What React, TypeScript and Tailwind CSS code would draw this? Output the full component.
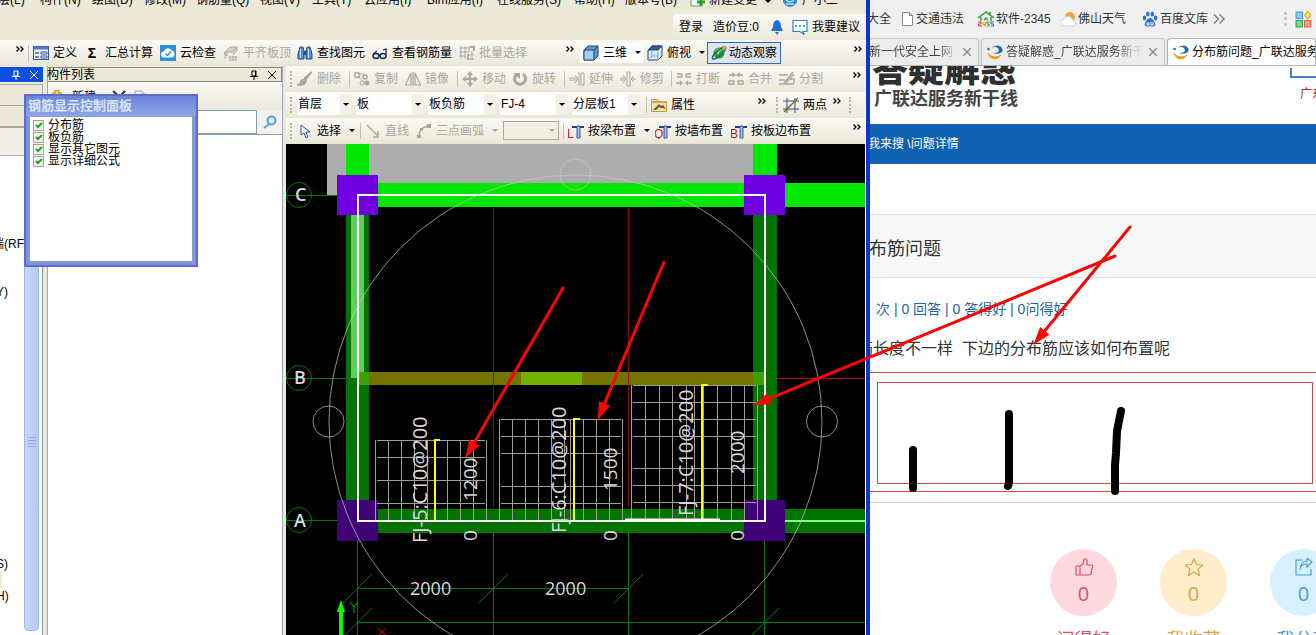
import { ReactNode } from "react";
import clsx from "clsx";

const BAR = "flex h-[26px] items-center border-b border-[#e6e3d3] bg-linear-to-b from-[#fbfaf6] to-[#ebe8da]";

const menus = [
  { label: "层(L)", width: "w-[42px]" },
  { label: "构件(N)", width: "w-[52px]" },
  { label: "绘图(D)", width: "w-[52px]" },
  { label: "修改(M)", width: "w-[52px]" },
  { label: "钢筋量(Q)", width: "w-[64px]" },
  { label: "视图(V)", width: "w-[52px]" },
  { label: "工具(T)", width: "w-[52px]" },
  { label: "云应用(I)", width: "w-[63px]" },
  { label: "Bim应用(I)", width: "w-[70px]" },
  { label: "在线服务(S)", width: "w-[77px]" },
  { label: "帮助(H)", width: "w-[51px]" },
  { label: "版本号(B)", width: "w-[64px]" },
];

const treeRows: Record<number, string> = { 5: "端(RF", 8: "Y)", 25: "S)", 27: "H)" };

const layers = ["分布筋", "板负筋", "显示其它图元", "显示详细公式"];

const G = "#aaa899";

const icons: Record<string, ReactNode> = {
  form: (
    <>
      <rect x="0.5" y="1.5" width="15" height="13" fill="#e4ecfa" stroke="#35599c" />
      <path d="M1 3h14" stroke="#4c7bd0" strokeWidth="3" />
      <path d="M2 8h4M2 12h4" stroke="#222" />
      <path d="M8 7h6v2H8zM8 11h6v2H8z" fill="#fff" stroke="#35599c" />
    </>
  ),
  cloud: (
    <>
      <rect width="16" height="16" fill="#2a93d8" />
      <path d="M4 12.500a3 3 0 0 1 0-6 4 4 0 0 1 7.500-1 3.600 3.600 0 0 1 .5 7z" fill="#fff" />
      <path d="M5.500 8.500l2 2 3.500-4" fill="none" stroke="#2a93d8" strokeWidth="1.500" />
    </>
  ),
  align: (
    <path d="M1 8l6-6h7l-5 5H4v4l-3-3zM2 14V9M5 12h9M6 15h8M7 12v3M10 11v4M13 11v4M9 7l5-5v3l-4 5" fill="#d4d1c5" stroke={G} />
  ),
  binoculars: (
    <>
      <path d="M3 2h3l1 4v8H1V9zM10 2h3l2 7v5H9V6z" fill="#5a8ed6" stroke="#234a8c" />
      <path d="M6.500 6h3v4h-3z" fill="#234a8c" />
      <path d="M3.500 4v9M11.500 4v9" stroke="#c7defa" />
    </>
  ),
  glasses: (
    <>
      <ellipse cx="4" cy="11" rx="3" ry="2.500" fill="#cfe0f4" stroke="#22304c" strokeWidth="1.500" />
      <ellipse cx="11" cy="11" rx="3" ry="2.500" fill="#cfe0f4" stroke="#22304c" strokeWidth="1.500" />
      <path d="M7 10h1M1 9l4-3M14 10V4l-3 1" fill="none" stroke="#22304c" strokeWidth="1.300" />
    </>
  ),
  batch: (
    <>
      <path d="M0 3h10M0 7h10M0 11h7M2 1v13M6 1v13M10 1v6M8 10h7M8 14h7M13 6v9" fill="none" stroke={G} />
      <path d="M11 2h4v4M9 9v6" fill="none" stroke={G} strokeWidth="2" />
    </>
  ),
  cube: (
    <>
      <path d="M1 5l4-4h10v10l-4 4H1z" fill="#5d93cf" stroke="#24466f" />
      <path d="M1 5h10v10H1z" fill="#a8cdf0" stroke="#24466f" />
      <path d="M11 5l4-4" stroke="#24466f" />
    </>
  ),
  cubeTop: (
    <>
      <path d="M1 5l4-4h10v10l-4 4H1z" fill="#dcebf8" stroke="#24466f" />
      <path d="M1 5l4-4h10l-4 4z" fill="#2f6396" stroke="#24466f" />
      <path d="M11 5v10M5 5v6h6M5 11l-4 4" fill="none" stroke="#7ea6cc" />
    </>
  ),
  orbit: (
    <>
      <circle cx="8" cy="8" r="5.500" fill="#2aa04a" />
      <path d="M4 6q3-4 7-1-3 1-3 4-3 0-4-3z" fill="#8be07f" />
      <ellipse cx="8" cy="8" rx="8.500" ry="2.500" transform="rotate(-42 8 8)" fill="none" stroke="#21704a" strokeWidth="1.500" />
      <circle cx="13" cy="3" r="2" fill="#dca23c" />
    </>
  ),
  brush: <path d="M14 1L7 7l2 2 6-8zM7 8q-4 0-4 4l-3 2q6 1 8-1 2-2 1-4z" fill={G} stroke={G} />,
  copy: (
    <>
      <circle cx="3" cy="4" r="2.500" fill="none" stroke={G} strokeWidth="1.500" />
      <circle cx="11" cy="6" r="2" fill="none" stroke={G} strokeWidth="1.500" />
      <path d="M6 3h4M5 6l5 6" stroke={G} strokeDasharray="2 1" />
      <circle cx="13" cy="12" r="2.500" fill={G} />
      <circle cx="8" cy="12" r="2" fill="none" stroke={G} />
    </>
  ),
  mirror: <path d="M6 2v12H0.500zM10 2v12h5.500zM8 1v14" fill="none" stroke={G} strokeWidth="1.200" />,
  move: (
    <>
      <path d="M8 3v10M3 8h10" stroke={G} strokeWidth="2" />
      <path d="M8 0l3 4H5zM8 16l3-4H5zM0 8l4-3v6zM16 8l-4-3v6z" fill={G} />
    </>
  ),
  rotate: (
    <>
      <path d="M4 4a5.500 5.500 0 1 0 7-1" fill="none" stroke={G} strokeWidth="3" />
      <path d="M1 2h7v6z" fill={G} />
    </>
  ),
  extend: <path d="M0 7h8M0 9h8M10 1v14M12 2h3v12h-3zM6 4l3 4-3 4" fill="none" stroke={G} />,
  trim: <path d="M0 7h5M0 9h5M11 8h5M7 1h3v14H7zM3 4l3 4-3 4M14 5l-3 3 3 3" fill="none" stroke={G} />,
  split2: <path d="M1 3h5v3H1M15 3h-5v3h5M0 12h6M10 12h6M4 10l2 2-2 2M12 10l-2 2 2 2" fill="none" stroke={G} strokeWidth="1.300" />,
  merge: <path d="M1 4h5M10 4h5M4 2l3 2-3 2M12 2L9 4l3 2M1 10h5v3H1zM10 10h5v3h-5z" fill="none" stroke={G} strokeWidth="1.300" />,
  cut: <path d="M0 4h9M0 9h6M0 13h15M14 1L5 12M15 3L7 12M10 8h5v5" fill="none" stroke={G} strokeWidth="1.300" />,
  props: (
    <>
      <path d="M0.500 2.500h6l1 2h8v10h-15z" fill="#f8dfae" stroke="#d09a4c" />
      <path d="M1 5h14" stroke="#e0a058" strokeWidth="2" />
      <path d="M2 13l6-6 2 2 2-1 3 4-3-1-2 0-2-1-3 3z" fill="#6b5c2c" />
    </>
  ),
  twoPoint: (
    <>
      <path d="M4 1v15M12 1v15M0 4h16M0 12h16" stroke="#3b4a78" />
      <path d="M1 15L15 1" stroke="#b0402c" strokeWidth="1.300" />
      <circle cx="4" cy="12" r="1.500" fill="#3b9a38" />
      <circle cx="12" cy="4" r="1.500" fill="#3b9a38" />
    </>
  ),
  cursor: <path d="M4 2v10l3-2 2 5 2-1-2-5h4z" fill="#e8f0fb" stroke="#3a5a9a" />,
  line: <path d="M2 2l11 11M13 8v6H8" fill="none" stroke={G} strokeWidth="1.500" />,
  arc: (
    <>
      <path d="M3 13Q3 4 13 3" fill="none" stroke={G} strokeWidth="1.500" />
      <path d="M1 12h4v3H1zM11 1h4v4h-4zM4 5h3v3H4z" fill={G} />
    </>
  ),
  chat: (
    <>
      <path d="M1 1.500h14v11h-4l1 3-4-3H1z" fill="#fff" stroke="#2e7fd0" strokeWidth="1.200" />
      <path d="M3 7h2M7 7h2M11 7h2" stroke="#2e7fd0" strokeWidth="1.500" />
    </>
  ),
  bell: <path d="M8 1q4 1 4 7l2 4H2l2-4q0-6 4-7zM6 13h4l-2 3z" fill="#1f6fd6" />,
  newDoc: (
    <>
      <path d="M2 0h10v14H2z" fill="#eef8ea" stroke="#6a9a60" />
      <path d="M8 10h8M12 6v8" stroke="#2ba32b" strokeWidth="3" />
    </>
  ),
  glodon: (
    <>
      <path d="M3 5Q8 0 13 2q4 3 2 6-4 3-9 1 6 0 6-3-1-3-4-3-3 0-5 2z" fill="#1c70b8" />
      <path d="M1 9q2 4 7 4 4 0 6-2-2 4-7 4-5-1-6-6z" fill="#f39a1e" stroke="#f39a1e" />
      <circle cx="1.500" cy="5" r="1.300" fill="#1c70b8" />
    </>
  ),
  file: <path d="M2.500 1.500h7l3 3v10h-10zM9.500 1.500v3h3" fill="#fff" stroke="#8a8a8a" />,
  house: (
    <>
      <path d="M0 7l8-6 8 6M3 6v4M13 6v4M12 1v3M6 9l2-2 2 2" fill="none" stroke="#2f9e3f" strokeWidth="1.500" />
      <path d="M0 11h3v2H0.500v2H4" fill="none" stroke="#d8372a" />
      <path d="M5 11v2.500h3M7 11v5" fill="none" stroke="#e88b1c" />
      <path d="M12 11H9v2h2v2H9" fill="none" stroke="#2f9e3f" />
      <path d="M16 11h-3v2h2.500v2H13" fill="none" stroke="#2c6fc4" />
    </>
  ),
  weather: (
    <>
      <circle cx="10" cy="6" r="5" fill="#f7a530" />
      <path d="M4 15a3.500 3.500 0 0 1 0-7 4.500 4.500 0 0 1 8.500 1 3 3 0 0 1 .5 6z" fill="#fff" stroke="#cfd4da" />
    </>
  ),
  paw: (
    <g fill="#2f6fe0">
      <ellipse cx="2.500" cy="7" rx="1.800" ry="2.400" />
      <ellipse cx="5.800" cy="3" rx="1.800" ry="2.500" />
      <ellipse cx="10.300" cy="3" rx="1.800" ry="2.500" />
      <ellipse cx="13.600" cy="7" rx="1.800" ry="2.400" />
      <path d="M8 7q2 0 4 3t1 5q-2 1-5 0-3 1-5 0-1-2 1-5t4-3z" />
      <path d="M5 12h2v2H5zM9 11v3h2v-3" fill="none" stroke="#fff" />
    </g>
  ),
  apps: (
    <>
      <rect x="1" y="1" width="6" height="6" fill="#8fd0f5" stroke="#3b9bdc" />
      <rect x="1" y="9" width="6" height="6" fill="#7fd79a" stroke="#27a350" />
      <rect x="9" y="9" width="6" height="6" fill="#f8a08c" stroke="#e0604a" />
      <path d="M12 0.500l3 3.500-3 3.500L9 4z" fill="#fde36a" stroke="#e3a91a" />
    </>
  ),
};

function Icon({ name, className = "size-4" }: { name: string; className?: string }) {
  return (
    <svg viewBox="0 0 16 16" className={clsx("shrink-0", className)} aria-hidden="true">
      {icons[name]}
    </svg>
  );
}

// Placement icons: a letter in front of a beam section
function BeamIcon({ letter }: { letter: string }) {
  return (
    <svg viewBox="0 0 16 16" className="size-4 shrink-0" aria-hidden="true">
      <path d="M4 4h12" stroke="#1f3f7a" strokeWidth="2" />
      <path d="M9 3h3v12H9z" fill="#9dbbe6" stroke="#3a5a9a" />
      <text x="-1" y="15" fontSize="12" fill="#b01818">
        {letter}
      </text>
    </svg>
  );
}

function Caret({ disabled = false }: { disabled?: boolean }) {
  return (
    <svg viewBox="0 0 6 3" className={clsx("h-[3px] w-1.5 shrink-0", disabled ? "fill-[#aaa899]" : "fill-black")} aria-hidden="true">
      <path d="M0 0h6L3 3z" />
    </svg>
  );
}

function Tool({ icon, letter, label, width, disabled = false, caret = false }: {
  icon?: string;
  letter?: string;
  label: string;
  width: string;
  disabled?: boolean;
  caret?: boolean;
}) {
  return (
    <button disabled={disabled} className={clsx("flex shrink-0 items-center gap-1 whitespace-nowrap", width, disabled && "text-[#aaa899]")}>
      {icon && <Icon name={icon} />}
      {letter && <BeamIcon letter={letter} />}
      {label}
      {caret && <span className="pl-1"><Caret disabled={disabled} /></span>}
    </button>
  );
}

function Grip() {
  return <span className="mr-[5px] ml-1 h-4 w-0.5 shrink-0 border-l-2 border-dotted border-[#b9b6a6]" />;
}

function Sep() {
  return <span className="mr-1 h-4 w-px shrink-0 bg-[#c5c2b2]" />;
}

function More({ className }: { className?: string }) {
  return (
    <button aria-label="更多" className={clsx("shrink-0 pb-2", className)}>
      <svg viewBox="0 0 8 6" className="h-1.5 w-2" aria-hidden="true">
        <path d="M0.500 0.500L3 3 0.500 5.500M4.500 0.500L7 3 4.500 5.500" fill="none" stroke="#000" strokeWidth="1.300" />
      </svg>
    </button>
  );
}

function Combo({ value, label, width }: { value: string; label: string; width: string }) {
  return (
    <div className={clsx("relative mr-1 shrink-0 bg-white", width)}>
      <select aria-label={label} className="block h-5 w-full appearance-none pb-0.5 pl-px outline-none">
        <option>{value}</option>
      </select>
      <span className="pointer-events-none absolute inset-y-0 right-0 flex w-3 items-center justify-center bg-[#f3f1e7]">
        <Caret />
      </span>
    </div>
  );
}

function PanelButtons() {
  return (
    <span className="ml-auto flex gap-2 pr-1">
      <button aria-label="固定">
        <svg viewBox="0 0 10 10" className="size-2.5" fill="none" stroke="currentColor" aria-hidden="true">
          <path d="M3 1h4v5H3zM6.500 1v5M1 6.500h8M5 6.500V10" />
        </svg>
      </button>
      <button aria-label="关闭">
        <svg viewBox="0 0 10 10" className="size-2.5" fill="none" stroke="currentColor" aria-hidden="true">
          <path d="M1 1l8 8M9 1L1 9" />
        </svg>
      </button>
    </span>
  );
}

function TopBars() {
  return (
    <>
      <div className="flex h-3.5 items-end overflow-hidden whitespace-nowrap">
        <nav className="-ml-0.5 flex h-3.5 shrink-0">
          {menus.map((m) => (
            <button key={m.label} className={clsx("-mt-2 h-4 shrink-0 text-left leading-4", m.width)}>
              {m.label}
            </button>
          ))}
        </nav>
        <button className="-mt-2 flex h-[22px] w-[93px] shrink-0 gap-1 leading-4">
          <Icon name="newDoc" />
          新建变更
          <span className="pt-2 pl-1"><Caret /></span>
        </button>
        <button className="-mt-2 flex h-[22px] shrink-0 gap-1 leading-4">
          <svg viewBox="0 0 16 16" className="size-4" aria-hidden="true">
            <path d="M1 0h14v10q-3 5-7 5t-7-5z" fill="#2a8fe0" />
            <path d="M4 8q4 4 8 0M4 12h8" fill="none" stroke="#fff" />
          </svg>
          广小二
        </button>
      </div>
      <div className="flex h-[26px] justify-end">
        <div className="flex w-[193px] items-center rounded-l bg-linear-to-b from-[#fbfaf6] to-[#ebe8da] pl-1.5 whitespace-nowrap">
          <button className="w-[34px] shrink-0 text-left">登录</button>
          <span className="w-14 shrink-0">造价豆:0</span>
          <button aria-label="通知" className="w-[23px] shrink-0"><Icon name="bell" /></button>
          <button className="flex shrink-0 items-center gap-1"><Icon name="chat" />我要建议</button>
        </div>
      </div>
      <div className={BAR}>
        <More className="mr-1 ml-4" />
        <Sep />
        <Tool icon="form" label="定义" width="w-[54px]" />
        <button className="flex w-[73px] shrink-0 items-center gap-2 whitespace-nowrap">
          <b className="w-2.5 text-sm">Σ</b>汇总计算
        </button>
        <Tool icon="cloud" label="云检查" width="w-[63px]" />
        <Tool icon="align" label="平齐板顶" width="w-[74px]" disabled />
        <Tool icon="binoculars" label="查找图元" width="w-[75px]" />
        <Tool icon="glasses" label="查看钢筋量" width="w-[87px]" />
        <Tool icon="batch" label="批量选择" width="w-[107px]" disabled />
        <More className="mr-1.5" />
        <div className="mr-1 flex h-5 items-center bg-white pl-[3px]">
          <Tool icon="cube" label="三维" width="w-[60px]" caret />
        </div>
        <Tool icon="cubeTop" label="俯视" width="w-[60px]" caret />
        <button className="flex h-[22px] shrink-0 items-center gap-0.5 border border-[#316ac5] bg-[#dfe5ee] px-[3px] whitespace-nowrap">
          <Icon name="orbit" />动态观察
        </button>
        <More className="mr-1 ml-auto" />
      </div>
    </>
  );
}

function EditBars() {
  return (
    <>
      <div className={BAR}>
        <Grip />
        <Tool icon="brush" label="删除" width="w-[52px]" disabled />
        <Sep />
        <Tool icon="copy" label="复制" width="w-[51px]" disabled />
        <Tool icon="mirror" label="镜像" width="w-[52px]" disabled />
        <Sep />
        <Tool icon="move" label="移动" width="w-[50px]" disabled />
        <Tool icon="rotate" label="旋转" width="w-[52px]" disabled />
        <Sep />
        <Tool icon="extend" label="延伸" width="w-[51px]" disabled />
        <Tool icon="trim" label="修剪" width="w-[51px]" disabled />
        <Sep />
        <Tool icon="split2" label="打断" width="w-[52px]" disabled />
        <Tool icon="merge" label="合并" width="w-[51px]" disabled />
        <Tool icon="cut" label="分割" width="w-[51px]" disabled />
        <More className="mr-1 ml-auto" />
      </div>
      <div className={BAR}>
        <Grip />
        <Combo value="首层" label="楼层" width="w-[55px]" />
        <Combo value="板" label="构件类型" width="w-[68px]" />
        <Combo value="板负筋" label="构件种类" width="w-[68px]" />
        <Combo value="FJ-4" label="构件名称" width="w-[68px]" />
        <Combo value="分层板1" label="分层" width="w-[68px]" />
        <span className="w-0.5 shrink-0" />
        <Sep />
        <Tool icon="props" label="属性" width="w-[107px]" />
        <More className="mr-1.5" />
        <Grip />
        <Tool icon="twoPoint" label="两点" width="w-[50px]" />
        <More className="mr-1" />
        <Grip />
      </div>
      <div className={BAR}>
        <Grip />
        <Tool icon="cursor" label="选择" width="w-[63px]" caret />
        <Sep />
        <Tool icon="line" label="直线" width="w-[51px]" disabled />
        <Tool icon="arc" label="三点画弧" width="w-[85px]" disabled caret />
        <div className="relative mr-1 ml-0.5 w-14 shrink-0">
          <select aria-label="画弧方式" disabled className="block h-[19px] w-full appearance-none border border-[#aca899] bg-[#f1efe4]">
            <option></option>
          </select>
          <span className="pointer-events-none absolute inset-y-0 right-1 flex items-center"><Caret disabled /></span>
        </div>
        <Sep />
        <Tool letter="L" label="按梁布置" width="w-[87px]" caret />
        <Tool letter="Q" label="按墙布置" width="w-[76px]" />
        <Tool letter="B" label="按板边布置" width="w-[85px]" />
        <More className="mr-1 ml-auto" />
      </div>
    </>
  );
}

function ModuleTree() {
  return (
    <div className="flex w-[43px] shrink-0 flex-col bg-[#ece9d8]">
      <div className="mt-px flex h-[15px] items-center bg-[#0a50e0] text-white">
        <PanelButtons />
      </div>
      <div className="mt-0.5 h-[22px] border border-l-0 border-[#aca899]" />
      <div className="h-[22px] border-b-2 border-[#aca899]" />
      <div className="h-7 border-b border-[#aca899] bg-[#f1efe6]" />
      <div className="flex min-h-0 flex-1 border-r border-[#7f9db9] bg-white">
        <ul className="w-6 shrink-0 overflow-hidden">
          {Array.from({ length: 30 }, (_, i) => (
            <li key={i} className="flex h-4 items-center">
              {i === 26 && <span className="h-4 w-0.5 bg-[#ece9d8]" />}
              <span className={i === 5 ? "-ml-2 whitespace-nowrap" : "-ml-1"}>{treeRows[i]}</span>
            </li>
          ))}
        </ul>
        <div className="mb-1 flex w-[15px] flex-col items-center justify-center gap-0.5 rounded-b-sm border border-[#9db8f0] bg-linear-to-r from-[#c9d8fd] to-[#b5c8fa] pt-24">
          {[0, 1, 2, 3].map((i) => (
            <span key={i} className="h-px w-2 bg-[#8fa8e4]" />
          ))}
        </div>
      </div>
    </div>
  );
}

function ComponentList() {
  return (
    <div className="ml-1 flex min-w-0 flex-1 flex-col border-x border-[#9aa7b8]">
      <div className="mt-px flex h-[15px] items-center border border-l-0 border-[#8a887a] bg-[#ece9d8] text-black">
        <h2 className="-ml-px leading-3">构件列表</h2>
        <PanelButtons />
      </div>
      <div className="flex h-7 items-center bg-linear-to-b from-[#fbfaf6] to-[#ebe8da] pb-0.5 pl-1">
        <svg viewBox="0 0 10 10" className="size-2.5" aria-hidden="true">
          <path d="M3 0h4v3h3v4H7v3H3V7H0V3h3z" fill="#ffd83c" stroke="#a58a10" />
        </svg>
        <button className="ml-2.5 w-10 shrink-0 pt-1 text-left leading-4">新建</button>
        <svg viewBox="0 0 14 14" className="mt-1 size-3.5" aria-hidden="true">
          <path d="M1 1l12 11M13 1L2 13" stroke="#333" strokeWidth="2" />
        </svg>
        <svg viewBox="0 0 16 14" className="mt-1 ml-2 h-3.5 w-4" fill="#eef3fa" stroke="#8fa6c4" aria-hidden="true">
          <path d="M1 1h7l2 3v8H1zM6 4h6l3 3v6H6z" />
        </svg>
      </div>
      <div className="flex h-6 shrink-0 items-stretch bg-[#ece9d8]">
        <input aria-label="搜索构件" className="min-w-0 flex-1 border border-[#7f9db9] bg-white px-1" />
        <button aria-label="搜索" className="flex w-[25px] items-center justify-center bg-[#f4f2ea]">
          <svg viewBox="0 0 14 14" className="size-3.5" fill="#d9efff" stroke="#5aa0dc" strokeWidth="2" aria-hidden="true">
            <path d="M6 9l-5 4" />
            <circle cx="8.500" cy="5.500" r="4" />
          </svg>
        </button>
      </div>
      <div className="flex-1 border-t border-[#7f9db9] bg-white" />
    </div>
  );
}

function DisplayPanel() {
  return (
    <section className="absolute top-[94px] left-6 w-[174px] border-2 border-[#5f68cf] bg-[#7a93df]">
      <h2 className="bg-linear-to-b from-[#6d83dc] to-[#8ca4ea] pl-0.5 text-[13px] leading-5 font-bold text-[#dbe5fb]">钢筋显示控制面板</h2>
      <div className="mx-[3px] mb-[3px] h-[146px] border border-[#8ba3c0] bg-white px-[3px] pt-0.5">
        {layers.map((name) => (
          <label key={name} className="flex h-3 items-center gap-1 leading-3">
            <span className="relative flex size-[11px]">
              <input type="checkbox" defaultChecked className="size-[11px] appearance-none border border-[#a5a092] bg-[#f0f5ec]" />
              <svg viewBox="0 0 11 11" className="pointer-events-none absolute inset-0" fill="none" stroke="#21a121" strokeWidth="2" aria-hidden="true">
                <path d="M3 5l2 2 4-4" />
              </svg>
            </span>
            {name}
          </label>
        ))}
      </div>
    </section>
  );
}

type MeshProps = { xs: number[]; ys: number[]; bottom: number; bar: number; tick: number };

const meshes: MeshProps[] = [
  { xs: [375, 388, 401, 414, 427, 447, 460, 473, 486], ys: [440, 457, 480, 503], bottom: 520, bar: 435, tick: 440 },
  { xs: [499, 512, 525, 538, 551, 564, 570, 583, 596, 609, 622], ys: [419, 436, 453, 486, 503], bottom: 520, bar: 574, tick: 580 },
  { xs: [631, 645, 659, 672, 686, 694, 703, 717, 731, 744, 757], ys: [385, 402, 419, 436, 468, 485, 502], bottom: 520, bar: 702, tick: 708 },
];

function Mesh({ xs, ys, bottom, bar, tick }: MeshProps) {
  const left = xs[0] + 2;
  const right = xs[xs.length - 1] - 1;
  return (
    <g fill="none" stroke="#a39c94" shapeRendering="crispEdges">
      {xs.map((x) => <path key={x} d={`M${x + 0.5} ${ys[0]}V${bottom}`} />)}
      {ys.map((y) => <path key={y} d={`M${left} ${y + 0.5}H${right}`} />)}
      <path d={`M${tick} ${ys[0]}H${bar}V${bottom}`} stroke="#ffff00" strokeWidth="2" />
    </g>
  );
}

const rebarLabels = [
  { x: 427, y: 543, text: "FJ-5:C10@200", size: 20 },
  { x: 566, y: 533, text: "FJ-6:C10@200", size: 20 },
  { x: 693, y: 516, text: "FJ-7:C10@200", size: 20 },
  { x: 477, y: 501, text: "1200", size: 19 },
  { x: 617, y: 491, text: "1500", size: 19 },
  { x: 744, y: 474, text: "2000", size: 19 },
  { x: 477, y: 541, text: "0", size: 19 },
  { x: 617, y: 541, text: "0", size: 19 },
  { x: 744, y: 541, text: "0", size: 19 },
];

function Drawing() {
  return (
    <svg className="min-h-0 w-full flex-1 bg-black" role="img" aria-label="板负筋平面图">
      <g transform="translate(-286 -144)" fontFamily="'Open Sans', sans-serif">
        <g shapeRendering="crispEdges">
          <path d="M327 144h426v51H327z" fill="#adadad" />
          <path d="M346 144h23v31h-23zM753 144h24v31h-24zM369 183h1600v24H369z" fill="#00e600" />
          <path d="M346 215h23v285h-23zM753 207h24v293h-24zM369 509h1600v24H369z" fill="#007300" />
          <path d="M351 215h13v163h-13z" fill="#5bd05b" />
          <path d="M359 372h406v13H359z" fill="#737300" />
          <path d="M359 372h10v13h-10zM753 372h12v13h-12z" fill="#3fa000" />
          <path d="M521 372h61v13h-61z" fill="#73b000" />
          <path d="M337 175h41v40h-41zM744 175h41v40h-41z" fill="#7000e0" />
          <path d="M337 500h41v41h-41zM744 500h41v41h-41z" fill="#3f0078" />
          <path d="M493.500 208V507M628.500 208V507" stroke="#8c0c0c" />
          <path d="M777 378.500H2000" stroke="#c80000" />
          <path
            d="M357.500 541V635M493.500 533V635M628.500 533V635M764.500 541V635M357 588.500H629M357 622.500H2000M286 195.500H337M286 378.500H346M286 520.500H337"
            stroke="#007a10"
          />
        </g>
        <g stroke="#007a10" fill="none">
          <path d="M343 603l29-29M479 603l29-29M614 603l29-29M343 637l29-29M750 637l29-29" />
          <circle cx="299" cy="195" r="12.500" />
          <circle cx="299" cy="378" r="12.500" />
          <circle cx="299" cy="520" r="12.500" />
        </g>
        {meshes.map((m) => <Mesh key={m.bar} {...m} />)}
        <path d="M785 521H2000" stroke="#80ff80" strokeWidth="2" />
        <path d="M358 195H765V521H358zM625 519.500h95" fill="none" stroke="#fff" strokeWidth="2" />
        <g fill="none" stroke="#c8c8c8" strokeOpacity="0.700">
          <circle cx="575.500" cy="421.500" r="246.500" />
          <circle cx="575.500" cy="174.500" r="15.500" />
          <circle cx="328.500" cy="421.500" r="15.500" />
          <circle cx="822" cy="421.500" r="15.500" />
        </g>
        <g fill="#dcd8dc">
          <g fontSize="18" fontWeight="600">
            <text x="295" y="201">C</text>
            <text x="294" y="384">B</text>
            <text x="294" y="527">A</text>
          </g>
          <text x="410" y="595" fontSize="18">2000</text>
          <text x="545" y="595" fontSize="18">2000</text>
          {rebarLabels.map((l) => (
            <text key={`${l.text}-${l.x}`} transform={`translate(${l.x} ${l.y}) rotate(-90)`} fontSize={l.size}>
              {l.text}
            </text>
          ))}
        </g>
        <path d="M341 600l4 12h-2v23h-4v-23h-2z" fill="#00ff00" />
        <path d="M350 602l4 5 4-5M354 607v6" fill="none" stroke="#00c000" />
        <path d="M378 628l8 8M386 628l-8 8" stroke="#e00000" />
      </g>
    </svg>
  );
}

function Tab({ title, width, icon = true, active = false }: { title: string; width: string; icon?: boolean; active?: boolean }) {
  return (
    <div
      className={clsx(
        "flex h-full items-center rounded-t-sm border border-b-0",
        width,
        active ? "border-[#b5b5b5] bg-white text-black" : "border-[#c4c4c4] bg-[#ececec] text-[#444]"
      )}
    >
      {icon && <span className="pr-[3px] pl-[5px]"><Icon name="glodon" /></span>}
      <span className={clsx("flex-1 overflow-hidden whitespace-nowrap", !active && "mask-r-from-80%")}>{title}</span>
      {!active && (
        <button aria-label="关闭标签页" className="px-[7px]">
          <svg viewBox="0 0 8 8" className="size-2" stroke="#8c8c8c" strokeWidth="1.500" aria-hidden="true">
            <path d="M0 0l8 8M8 0L0 8" />
          </svg>
        </button>
      )}
    </div>
  );
}

const votes = [
  {
    label: "问得好",
    color: "text-[#d9506a]",
    bg: "bg-[#ffd9df]",
    path: "M1 8h4v9H1zM5 8l3-2 1-5q3-1 3 2v4h5q1 1 0 3l-1 6-2 1H5",
  },
  {
    label: "我收藏",
    color: "text-[#d9a441]",
    bg: "bg-[#ffedcc]",
    path: "M9 0.500l2.500 6 6.500.5-5 4 1.500 6.500L9 14l-5.500 3.500L5 11 0 7l6.500-.5z",
  },
  {
    label: "我分享",
    color: "text-[#4a9bd9]",
    bg: "bg-[#d6f0ff]",
    path: "M8 2H1v15h15v-6M5 12q0-6 7-6v3l5-5-5-4v3Q5 4 5 12z",
  },
];

function Browser() {
  return (
    <div className="flex min-w-0 flex-col overflow-hidden bg-white">
      <div className="flex h-[38px] shrink-0 items-center bg-[#f0f0f0] whitespace-nowrap text-[#333]">
        <a href="#all" className="-ml-[3px] w-[33px] shrink-0">大全</a>
        <a href="#traffic" className="flex w-[78px] shrink-0 items-center"><Icon name="file" />交通违法</a>
        <a href="#soft" className="flex w-[82px] shrink-0 items-center gap-0.5"><Icon name="house" />软件-2345</a>
        <a href="#weather" className="flex w-[82px] shrink-0 items-center gap-0.5"><Icon name="weather" />佛山天气</a>
        <a href="#docs" className="flex w-[71px] shrink-0 items-center gap-0.5"><Icon name="paw" />百度文库</a>
        <button aria-label="更多书签">
          <svg viewBox="0 0 12 10" className="h-2.5 w-3" fill="none" stroke="#777" strokeWidth="1.300" aria-hidden="true">
            <path d="M1 0.500L5.500 5 1 9.500M6.500 0.500L11 5l-4.500 4.500" />
          </svg>
        </button>
        <span className="mr-2 ml-auto h-3.5 border-l-3 border-dotted border-[#c8c8c8]" />
        <button aria-label="扩展" className="pr-1"><Icon name="apps" className="size-[17px]" /></button>
      </div>
      <div className="flex h-7 shrink-0 gap-0.5 border-b border-[#b5b5b5] bg-[#e6e6e6]">
        <Tab title="新一代安全上网导" width="-ml-0.5 w-[111px]" icon={false} />
        <Tab title="答疑解惑_广联达服务新干线" width="w-[184px]" />
        <Tab title="分布筋问题_广联达服务新干线" width="min-w-0 flex-1" active />
      </div>
      <header className="flex h-[58px] shrink-0 items-start overflow-hidden">
        <div className="-mt-4 pl-0.5 text-[#2f2f2f]">
          <h1 className="text-4xl leading-10 font-black">答疑解惑</h1>
          <p className="pl-0.5 text-lg leading-[18px] font-bold text-[#444]">广联达服务新干线</p>
        </div>
        <div className="ml-auto w-[26px] shrink-0 overflow-hidden">
          <div className="mt-0.5 h-2.5 border-b-2 border-l-2 border-[#3a86c8]" />
          <p className="pt-2 pl-2.5 whitespace-nowrap text-[#c01c1c]">广东</p>
        </div>
      </header>
      <nav className="flex h-10 shrink-0 items-center bg-[#0f61b2] whitespace-nowrap text-white">
        <span className="-ml-0.5"><a href="#search">我来搜</a> \<a href="#detail">问题详情</a></span>
      </nav>
      <h2 className="mt-[50px] -ml-px flex h-16 shrink-0 items-center border-y border-[#e2e2e2] bg-[#f8f8f8] pt-1.5 text-lg text-[#333]">布筋问题</h2>
      <p className="mt-[19px] shrink-0 pl-1.5 text-sm leading-6 whitespace-nowrap text-[#1d64a8]">次 | 0 回答 | 0 答得好 | 0问得好</p>
      <p className="mt-4 -ml-[13px] shrink-0 text-base leading-6 whitespace-pre text-[#333]">筋长度不一样  下边的分布筋应该如何布置呢</p>
      <div className="mt-[11px] h-[120px] shrink-0 border-y border-[#cc4a4a] py-[9px] pr-[3px] pl-[7px]">
        <div className="h-[102px] border border-[#cc4a4a]">
          <svg className="h-28 w-full overflow-visible" fill="none" stroke="#000" strokeWidth="8" strokeLinecap="round" strokeLinejoin="round" aria-hidden="true">
            <path d="M35 67v38M131 31v69l-1 3M243 28l-4 20-1 22-1 12v26" />
          </svg>
        </div>
      </div>
      <div className="mt-2.5 shrink-0 border-b border-[#cfcfcf]" />
      <div className="mt-[46px] -mr-[21px] ml-auto flex shrink-0 gap-[43px]">
        {votes.map((v) => (
          <button key={v.label} className={clsx("flex w-[67px] flex-col items-center text-lg", v.color)}>
            <span className={clsx("flex size-[67px] flex-col items-center rounded-full pt-[9px]", v.bg)}>
              <svg viewBox="0 0 18 18" className="size-[18px]" fill="none" stroke="currentColor" strokeWidth="1.200" aria-hidden="true">
                <path d={v.path} />
              </svg>
              <span className="pt-1 font-['Open_Sans',sans-serif] text-xl leading-7">0</span>
            </span>
            <span className="mt-3 leading-6">{v.label}</span>
          </button>
        ))}
      </div>
    </div>
  );
}

const arrows = [
  { from: [563, 288], to: [466, 457] },
  { from: [664, 262], to: [598, 419] },
  { from: [1115, 256], to: [754, 405] },
  { from: [1130, 227], to: [1034, 344] },
];

function Arrows() {
  return (
    <svg className="pointer-events-none absolute inset-0 size-full" aria-hidden="true">
      <defs>
        <marker id="head" viewBox="0 0 18 12" refX="17" refY="6" markerWidth="18" markerHeight="12" markerUnits="userSpaceOnUse" orient="auto">
          <path d="M0 0l18 6-18 6z" fill="#fa0505" />
        </marker>
      </defs>
      {arrows.map(({ from, to }) => {
        const len = Math.hypot(to[0] - from[0], to[1] - from[1]);
        const k = (len - 8) / len;
        const x = from[0] + (to[0] - from[0]) * k;
        const y = from[1] + (to[1] - from[1]) * k;
        return (
          <g key={from[0]} stroke="#fa0505" strokeLinecap="round">
            <path d={`M${from[0]} ${from[1]}L${x} ${y}`} strokeWidth="3" />
            <path d={`M${from[0]} ${from[1]}L${to[0]} ${to[1]}`} strokeWidth="1" markerEnd="url(#head)" />
          </g>
        );
      })}
    </svg>
  );
}

export default function App() {
  return (
    <div className="relative grid h-screen grid-cols-[870fr_446fr] overflow-hidden font-['Liberation_Sans','Noto_Sans_CJK_SC',sans-serif] text-xs text-black">
      <div className="flex min-w-0 flex-col overflow-hidden border-r-4 border-[#0a35d0] bg-[#ece9d8]">
        <TopBars />
        <div className="flex min-h-0 flex-1 border-r border-white">
          <div className="flex w-[286px] shrink-0 pr-[3px]">
            <ModuleTree />
            <ComponentList />
          </div>
          <div className="flex min-w-0 flex-1 flex-col">
            <EditBars />
            <Drawing />
          </div>
        </div>
      </div>
      <Browser />
      <DisplayPanel />
      <Arrows />
    </div>
  );
}
